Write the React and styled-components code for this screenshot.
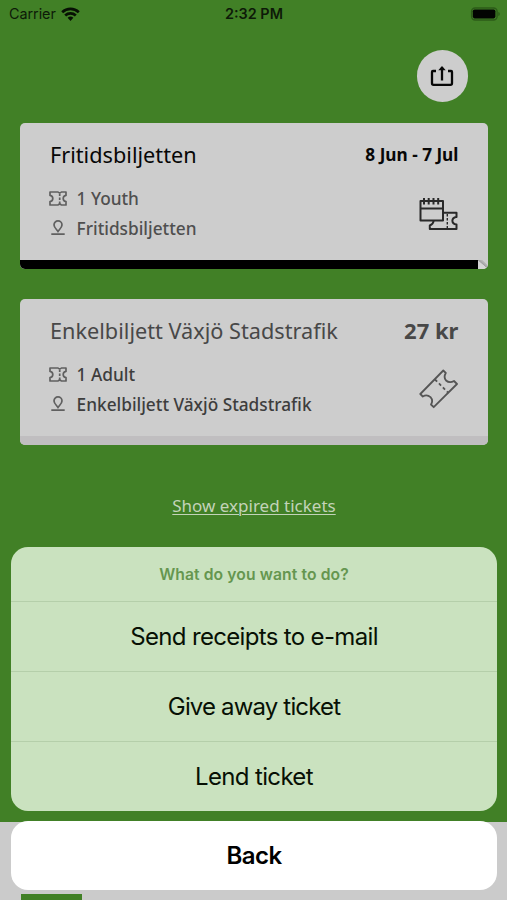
import React from 'react';
import styled, { createGlobalStyle } from 'styled-components';

const GlobalStyle = createGlobalStyle`
  * { box-sizing: border-box; }
  body { margin: 0; }
`;

const Screen = styled.div`
  position: relative;
  display: flex;
  flex-direction: column;
  width: 507px;
  height: 900px;
  overflow: hidden;
  background: #418026;
  color: #050805;
  font-family: 'Noto Sans', sans-serif;
`;

const StatusBar = styled.header`
  display: grid;
  grid-template-columns: 1fr auto 1fr;
  align-items: center;
  height: 28px;
  padding: 0 7px 0 9px;
  font: 400 14.4px/28px Inter, sans-serif;
  color: #0d1a08;
`;

const Carrier = styled.div`
  display: flex;
  align-items: center;
  gap: 5px;
  letter-spacing: -0.05px;
`;

const Clock = styled.div`
  margin-right: 1px;
  font-weight: 600;
  font-size: 14.4px;
`;

const Battery = styled.svg`
  justify-self: end;
`;

const TopBar = styled.div`
  display: flex;
  justify-content: flex-end;
  padding: 22px 39px 0 0;
  height: 95px;
`;

const ShareButton = styled.button`
  display: grid;
  place-items: center;
  width: 51.5px;
  height: 51.5px;
  padding: 0;
  border: 0;
  border-radius: 50%;
  background: #cdcdcd;
`;

const Tickets = styled.main`
  display: flex;
  flex-direction: column;
  gap: 29.5px;
  padding: 0 19.4px 0 20.4px;
`;

const Card = styled.article`
  display: flex;
  flex-direction: column;
  height: 146.4px;
  border-radius: 5px;
  overflow: hidden;
  background: #cdcdcd;
  color: ${(p) => (p.$muted ? '#484848' : '#070707')};
`;

const CardBody = styled.div`
  flex: 1;
  padding: 15px 29.2px 0 29px;
`;

const CardHead = styled.div`
  display: flex;
  justify-content: space-between;
  align-items: center;
  height: 33px;
  margin-bottom: 13px;
  padding-left: 0.6px;
`;

const Title = styled.h2`
  margin: 0;
  font-size: 21.7px;
  font-weight: 400;
  line-height: 33px;
  white-space: nowrap;
`;

const Value = styled.div`
  font-size: ${(p) => (p.$large ? 22 : 17.2)}px;
  font-weight: 700;
  white-space: nowrap;
`;

const CardInfo = styled.div`
  display: flex;
  justify-content: space-between;
  align-items: center;
`;

const Details = styled.div`
  display: flex;
  flex-direction: column;
`;

const Detail = styled.div`
  display: flex;
  align-items: center;
  gap: 9.2px;
  height: 29.5px;
  font-size: 17.25px;
  font-weight: 500;
  color: ${(p) => (p.$dark ? '#3d3d3d' : '#4f4f4f')};
  white-space: nowrap;
`;

const CardFooter = styled.div`
  display: flex;
  height: 9.4px;
  background: ${(p) => (p.$active ? '#cdcdcd' : '#c0bec0')};
`;

const Progress = styled.div`
  width: 457.2px;
  background: #000;
`;

const ProgressEnd = styled.div`
  flex: 1;
  background: linear-gradient(42deg, #d5d5d5 0 47%, #9d9d9d 50%, #bcbcbc 70%, #cdcdcd 72%);
`;

const ExpiredLink = styled.a`
  align-self: center;
  margin: 48px 0 0 1px;
  font-size: 17px;
  line-height: 26px;
  color: #c3d3b9;
  text-decoration: underline;
  text-decoration-thickness: 1px;
  text-underline-offset: 2px;
`;

const TabBar = styled.nav`
  display: flex;
  align-items: flex-end;
  height: 78px;
  margin-top: auto;
  padding-left: 21px;
  background: #cbcbcb;
`;

const ActiveTab = styled.div`
  width: 61px;
  height: 6px;
  background: #418026;
`;

const ActionSheet = styled.section`
  position: absolute;
  left: 11px;
  right: 10px;
  bottom: 10px;
  display: flex;
  flex-direction: column;
  gap: 10.5px;
  font-family: Inter, sans-serif;
`;

const Options = styled.div`
  border-radius: 17px;
  overflow: hidden;
  background: #cae2bf;
`;

const Prompt = styled.div`
  height: 54px;
  font-size: 15.7px;
  font-weight: 600;
  line-height: 55px;
  letter-spacing: 0.1px;
  text-align: center;
  color: #65964f;
`;

const Option = styled.button`
  display: block;
  width: 100%;
  height: 70px;
  padding: 0;
  border: 0;
  border-top: 1px solid #b5cfaa;
  background: none;
  font: 400 24px/69px Inter, sans-serif;
  letter-spacing: ${(p) => p.$tracking}px;
  color: #071004;
`;

const BackButton = styled.button`
  height: 69px;
  padding: 0;
  border: 0;
  border-radius: 17px;
  background: #fff;
  font: 600 24px/69px Inter, sans-serif;
  letter-spacing: -0.5px;
  color: #000;
`;

const WifiIcon = () => (
  <svg width="19" height="15" viewBox="0 0 19 15" fill="none" stroke="#071004" strokeWidth="2.7">
    <path d="M1.2 5.2C5.9.8 13.1.8 17.8 5.2" />
    <path d="M4.2 8.5C7.2 5.7 11.8 5.7 14.8 8.5" />
    <path d="M6.6 10.8a4.2 4.2 0 0 1 5.8 0L9.500 14z" fill="#071004" stroke="none" />
  </svg>
);

const BatteryIcon = () => (
  <Battery width="30" height="15" viewBox="0 0 30 15">
    <rect x="1.6" y="1" width="25.5" height="12" rx="3.5" fill="none" stroke="#2c5b19" strokeWidth="1.4" />
    <rect x="2.8" y="2.4" width="22.6" height="9" rx="1.8" fill="#020402" />
    <path d="M28.3 5v4c2-.7 2-3.3 0-4" fill="#2c5b19" />
  </Battery>
);

const ShareIcon = () => (
  <svg width="24" height="24" viewBox="0 0 24 24" fill="none" stroke="#080808" strokeWidth="2.3">
    <path d="M6 7H2.9Q2 7 2 8V19.3Q2 20.8 3.5 20.8H20.5Q22 20.8 22 19.3V8Q22 7 21.1 7H18" />
    <path d="M12 16.5V3.5" />
    <path d="M8.3 6.3 12 2 15.7 6.3Z" fill="#080808" stroke="none" />
  </svg>
);

const SmallTicketIcon = () => (
  <svg width="18" height="15" viewBox="0 0 18 15" fill="none" stroke="#606060" strokeWidth="1.7" strokeLinejoin="round">
    <path d="M1 1H9Q10.7 2.7 12.4 1H17V4.4Q14.2 4.8 14.2 7.5T17 10.6V14H12.4Q10.7 12.3 9 14H1V10.6Q3.8 10.2 3.8 7.5T1 4.4Z" />
    <path d="M10.7 2.5V13" strokeDasharray="2.5 1.5" />
  </svg>
);

const PinIcon = () => (
  <svg width="18" height="16" viewBox="0 0 18 16" fill="none" stroke="#606060" strokeWidth="1.7">
    <path d="M9 11.5C7.5 9.5 5 7.3 5 4.9a4 4 0 0 1 8 0C13 7.3 10.5 9.5 9 11.500ZM2.300 14.200H15.700" />
  </svg>
);

const PeriodTicketIcon = () => (
  <svg width="39" height="34" viewBox="0 0 39 34" fill="none" stroke="#292929" strokeWidth="2" strokeLinejoin="round">
    <path d="M1.5 4H24V23.5H1.5ZM1.5 11.5H24" />
    <path d="M5 1V7.5M9.7 1V7.5M14.5 1V7.5M19.2 1V7.5" />
    <path d="M24 15.8H37.5V20C32 20.7 32 26.8 37.5 27.5V32H10.8V28.5Q14.2 27.4 14.6 24" />
    <path d="M28.3 17V32" strokeWidth="1.4" strokeDasharray="2.5 1.5" />
  </svg>
);

const SingleTicketIcon = () => (
  <svg width="39" height="40" viewBox="0 0 39 40" fill="none" stroke="#555" strokeWidth="1.8" strokeLinejoin="round">
    <path d="M24.3 1.5 26.8 4Q24.3 8.3 27 11.5 30.5 14.5 35 12L38 15 14.7 38.2 12 35.5Q14.5 31.5 11.5 28.2 8 25 3.8 27.5L1.3 25Z" />
    <path d="M16 10.5 29.5 24" strokeDasharray="3 2.6" />
  </svg>
);

const TicketCard = ({ title, value, passenger, zone, muted, icon }) => (
  <Card $muted={muted}>
    <CardBody>
      <CardHead>
        <Title>{title}</Title>
        <Value $large={muted}>{value}</Value>
      </CardHead>
      <CardInfo>
        <Details>
          <Detail $dark={muted}><SmallTicketIcon />{passenger}</Detail>
          <Detail $dark={muted}><PinIcon />{zone}</Detail>
        </Details>
        {icon}
      </CardInfo>
    </CardBody>
    <CardFooter $active={!muted}>
      {!muted && <><Progress /><ProgressEnd /></>}
    </CardFooter>
  </Card>
);

export default function App() {
  return (
    <Screen>
      <GlobalStyle />
      <StatusBar>
        <Carrier>Carrier<WifiIcon /></Carrier>
        <Clock>2:32 PM</Clock>
        <BatteryIcon />
      </StatusBar>
      <TopBar>
        <ShareButton aria-label="Share"><ShareIcon /></ShareButton>
      </TopBar>
      <Tickets>
        <TicketCard
          title="Fritidsbiljetten"
          value="8 Jun - 7 Jul"
          passenger="1 Youth"
          zone="Fritidsbiljetten"
          icon={<PeriodTicketIcon />}
        />
        <TicketCard
          muted
          title="Enkelbiljett Växjö Stadstrafik"
          value="27 kr"
          passenger="1 Adult"
          zone="Enkelbiljett Växjö Stadstrafik"
          icon={<SingleTicketIcon />}
        />
      </Tickets>
      <ExpiredLink>Show expired tickets</ExpiredLink>
      <TabBar><ActiveTab /></TabBar>
      <ActionSheet>
        <Options>
          <Prompt>What do you want to do?</Prompt>
          <Option $tracking={-0.66}>Send receipts to e-mail</Option>
          <Option $tracking={-0.84}>Give away ticket</Option>
          <Option $tracking={-0.66}>Lend ticket</Option>
        </Options>
        <BackButton>Back</BackButton>
      </ActionSheet>
    </Screen>
  );
}
